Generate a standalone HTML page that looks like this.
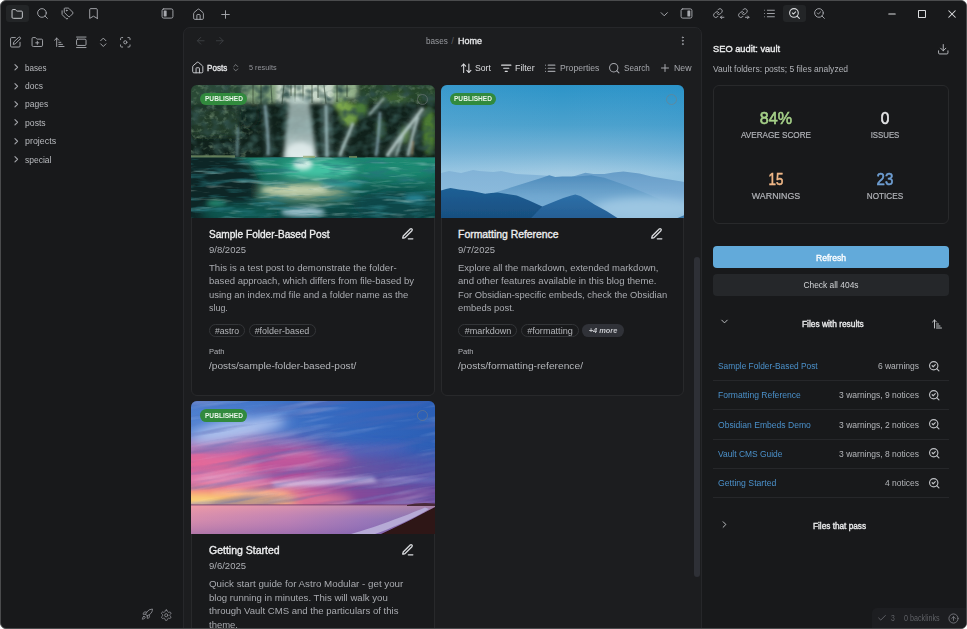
<!DOCTYPE html>
<html lang="en"><head><meta charset="utf-8"><title>Obsidian - Home</title>
<style>
html,body{margin:0;padding:0;background:#fff;}
body{width:967px;height:629px;overflow:hidden;position:relative;font-family:"Liberation Sans",sans-serif;}
#win{position:absolute;left:0;top:0;width:967px;height:629px;box-sizing:border-box;border:1px solid #4a4b4d;border-radius:6px;background:#18191b;overflow:hidden;}
#in{position:absolute;left:-1px;top:-1px;width:967px;height:629px;}
.b{position:absolute;box-sizing:border-box;}
.t{position:absolute;white-space:nowrap;}
.ic{position:absolute;fill:none;stroke:currentColor;stroke-linecap:round;stroke-linejoin:round;overflow:visible;}
.img{position:absolute;overflow:hidden;}
.img svg{display:block;width:100%;height:100%;}
</style></head>
<body>
<div id="win"><div id="in">
<div class="b" style="left:5.80px;top:4.70px;width:23.20px;height:17.70px;background:#232527;border-radius:3px;"></div>
<svg class="ic" style="left:10.90px;top:7.50px;width:12.4px;height:12.4px;color:#c9cbcf;stroke-width:1.9" viewBox="0 0 24 24" ><path d="M20 20a2 2 0 0 0 2-2V8a2 2 0 0 0-2-2h-7.9a2 2 0 0 1-1.69-.9L9.6 3.9A2 2 0 0 0 7.93 3H4a2 2 0 0 0-2 2v13a2 2 0 0 0 2 2Z"/></svg>
<svg class="ic" style="left:35.70px;top:7.20px;width:13px;height:13px;color:#a6a8ad;stroke-width:1.75" viewBox="0 0 24 24" ><circle cx="11" cy="11" r="8"/><path d="m21 21-4.3-4.3"/></svg>
<svg class="ic" style="left:61.00px;top:7.10px;width:13px;height:13px;color:#a6a8ad;stroke-width:1.75" viewBox="0 0 24 24" ><path d="M13.172 2a2 2 0 0 1 1.414.586l6.710 6.710a2.400 2.400 0 0 1 0 3.408l-4.592 4.592a2.400 2.400 0 0 1-3.408 0l-6.710-6.710A2 2 0 0 1 6 9.172V3a1 1 0 0 1 1-1z"/><path d="M2 7v6.172a2 2 0 0 0 .586 1.414l6.710 6.710a2.400 2.400 0 0 0 3.191.193"/><circle cx="10.500" cy="6.500" r=".8" fill="currentColor"/></svg>
<svg class="ic" style="left:86.50px;top:7.20px;width:13px;height:13px;color:#a6a8ad;stroke-width:1.75" viewBox="0 0 24 24" ><path d="m19 21-7-4-7 4V5a2 2 0 0 1 2-2h10a2 2 0 0 1 2 2v16z"/></svg>
<svg class="ic" style="left:160.50px;top:7.00px;width:13px;height:13px;color:#a6a8ad;stroke-width:1.75" viewBox="0 0 24 24" ><rect x="2" y="3.5" width="20" height="17" rx="3"/><rect x="5" y="6.4" width="5.4" height="11.2" rx="0.8" fill="currentColor" stroke="none"/></svg>
<svg class="ic" style="left:191.90px;top:7.50px;width:13px;height:13px;color:#a6a8ad;stroke-width:1.75" viewBox="0 0 24 24" ><path d="M15 21v-8a1 1 0 0 0-1-1h-4a1 1 0 0 0-1 1v8"/><path d="M3 10a2 2 0 0 1 .709-1.528l7-5.999a2 2 0 0 1 2.582 0l7 5.999A2 2 0 0 1 21 10v9a2 2 0 0 1-2 2H5a2 2 0 0 1-2-2z"/></svg>
<svg class="ic" style="left:218.70px;top:8.00px;width:13px;height:13px;color:#a6a8ad;stroke-width:1.75" viewBox="0 0 24 24" ><path d="M5 12h14"/><path d="M12 5v14"/></svg>
<svg class="ic" style="left:9.40px;top:35.50px;width:12.6px;height:12.6px;color:#a6a8ad;stroke-width:1.8" viewBox="0 0 24 24" ><path d="M12 3H5a2 2 0 0 0-2 2v14a2 2 0 0 0 2 2h14a2 2 0 0 0 2-2v-7"/><path d="M18.375 2.625a2.121 2.121 0 1 1 3 3L12 15l-4 1 1-4Z"/></svg>
<svg class="ic" style="left:31.40px;top:35.50px;width:12.6px;height:12.6px;color:#a6a8ad;stroke-width:1.8" viewBox="0 0 24 24" ><path d="M12 10v6"/><path d="M9 13h6"/><path d="M20 20a2 2 0 0 0 2-2V8a2 2 0 0 0-2-2h-7.9a2 2 0 0 1-1.69-.9L9.6 3.9A2 2 0 0 0 7.93 3H4a2 2 0 0 0-2 2v13a2 2 0 0 0 2 2Z"/></svg>
<svg class="ic" style="left:52.90px;top:35.50px;width:12.6px;height:12.6px;color:#a6a8ad;stroke-width:1.8" viewBox="0 0 24 24" ><path d="m3 8 4-4 4 4"/><path d="M7 4v16"/><path d="M11 12h4"/><path d="M11 16h7"/><path d="M11 20h10"/></svg>
<svg class="ic" style="left:74.70px;top:35.50px;width:12.6px;height:12.6px;color:#a6a8ad;stroke-width:1.8" viewBox="0 0 24 24" ><path d="M3 2h18"/><rect width="18" height="12" x="3" y="6" rx="2"/><path d="M3 22h18"/></svg>
<svg class="ic" style="left:96.70px;top:35.50px;width:12.6px;height:12.6px;color:#a6a8ad;stroke-width:1.8" viewBox="0 0 24 24" ><path d="m7 15 5 5 5-5"/><path d="m7 9 5-5 5 5"/></svg>
<svg class="ic" style="left:118.80px;top:35.50px;width:12.6px;height:12.6px;color:#a6a8ad;stroke-width:1.8" viewBox="0 0 24 24" ><circle cx="12" cy="12" r="3"/><path d="M3 7V5a2 2 0 0 1 2-2h2"/><path d="M17 3h2a2 2 0 0 1 2 2v2"/><path d="M21 17v2a2 2 0 0 1-2 2h-2"/><path d="M7 21H5a2 2 0 0 1-2-2v-2"/></svg>
<svg class="ic" style="left:11.15px;top:62.15px;width:10.5px;height:10.5px;color:#a2a4a9;stroke-width:2.5" viewBox="0 0 24 24" ><path d="m9 18 6-6-6-6"/></svg>
<div class="t" id="t0" style="top:60.59px;font-size:9.3px;line-height:14px;color:#b9bbbf;transform:scaleX(0.8665);transform-origin:0 50%;left:24.80px;"><span>bases</span></div>
<svg class="ic" style="left:11.15px;top:80.55px;width:10.5px;height:10.5px;color:#a2a4a9;stroke-width:2.5" viewBox="0 0 24 24" ><path d="m9 18 6-6-6-6"/></svg>
<div class="t" id="t1" style="top:78.99px;font-size:9.3px;line-height:14px;color:#b9bbbf;transform:scaleX(0.9114);transform-origin:0 50%;left:24.80px;"><span>docs</span></div>
<svg class="ic" style="left:11.15px;top:98.95px;width:10.5px;height:10.5px;color:#a2a4a9;stroke-width:2.5" viewBox="0 0 24 24" ><path d="m9 18 6-6-6-6"/></svg>
<div class="t" id="t2" style="top:97.39px;font-size:9.3px;line-height:14px;color:#b9bbbf;transform:scaleX(0.9154);transform-origin:0 50%;left:24.80px;"><span>pages</span></div>
<svg class="ic" style="left:11.15px;top:117.35px;width:10.5px;height:10.5px;color:#a2a4a9;stroke-width:2.5" viewBox="0 0 24 24" ><path d="m9 18 6-6-6-6"/></svg>
<div class="t" id="t3" style="top:115.79px;font-size:9.3px;line-height:14px;color:#b9bbbf;transform:scaleX(0.9310);transform-origin:0 50%;left:24.80px;"><span>posts</span></div>
<svg class="ic" style="left:11.15px;top:135.75px;width:10.5px;height:10.5px;color:#a2a4a9;stroke-width:2.5" viewBox="0 0 24 24" ><path d="m9 18 6-6-6-6"/></svg>
<div class="t" id="t4" style="top:134.19px;font-size:9.3px;line-height:14px;color:#b9bbbf;transform:scaleX(0.9551);transform-origin:0 50%;left:24.80px;"><span>projects</span></div>
<svg class="ic" style="left:11.15px;top:154.15px;width:10.5px;height:10.5px;color:#a2a4a9;stroke-width:2.5" viewBox="0 0 24 24" ><path d="m9 18 6-6-6-6"/></svg>
<div class="t" id="t5" style="top:152.59px;font-size:9.3px;line-height:14px;color:#b9bbbf;transform:scaleX(0.9153);transform-origin:0 50%;left:24.80px;"><span>special</span></div>
<svg class="ic" style="left:140.75px;top:608.35px;width:12.5px;height:12.5px;color:#8a8c91;stroke-width:1.75" viewBox="0 0 24 24" ><path d="M4.500 16.500c-1.500 1.260-2 5-2 5s3.740-.5 5-2c.710-.840.700-2.130-.090-2.910a2.180 2.180 0 0 0-2.910-.090z"/><path d="m12 15-3-3a22 22 0 0 1 2-3.950A12.880 12.880 0 0 1 22 2c0 2.720-.780 7.500-6 11a22.350 22.350 0 0 1-4 2z"/><path d="M9 12H4s.550-3.030 2-4c1.620-1.080 5 0 5 0"/><path d="M12 15v5s3.030-.550 4-2c1.080-1.620 0-5 0-5"/></svg>
<svg class="ic" style="left:160.45px;top:608.55px;width:12.5px;height:12.5px;color:#8a8c91;stroke-width:1.75" viewBox="0 0 24 24" ><path d="M12.220 2h-.440a2 2 0 0 0-2 2v.180a2 2 0 0 1-1 1.730l-.430.250a2 2 0 0 1-2 0l-.150-.080a2 2 0 0 0-2.730.730l-.220.380a2 2 0 0 0 .730 2.730l.150.100a2 2 0 0 1 1 1.720v.510a2 2 0 0 1-1 1.740l-.150.090a2 2 0 0 0-.730 2.730l.220.380a2 2 0 0 0 2.730.730l.150-.080a2 2 0 0 1 2 0l.430.250a2 2 0 0 1 1 1.730V20a2 2 0 0 0 2 2h.440a2 2 0 0 0 2-2v-.180a2 2 0 0 1 1-1.730l.430-.250a2 2 0 0 1 2 0l.150.080a2 2 0 0 0 2.730-.730l.220-.390a2 2 0 0 0-.730-2.730l-.150-.080a2 2 0 0 1-1-1.740v-.500a2 2 0 0 1 1-1.740l.150-.090a2 2 0 0 0 .730-2.730l-.220-.380a2 2 0 0 0-2.730-.730l-.150.080a2 2 0 0 1-2 0l-.430-.250a2 2 0 0 1-1-1.730V4a2 2 0 0 0-2-2z"/><circle cx="12" cy="12" r="3"/></svg>
<div class="b" style="left:183.00px;top:27.00px;width:519.00px;height:610.00px;background:#1c1d1f;border:1px solid #26272a;border-radius:7px 7px 0 0;"></div>
<svg class="ic" style="left:195.45px;top:35.15px;width:11.5px;height:11.5px;color:#3c3e42;stroke-width:2" viewBox="0 0 24 24" ><path d="m12 19-7-7 7-7"/><path d="M19 12H5"/></svg>
<svg class="ic" style="left:214.45px;top:35.15px;width:11.5px;height:11.5px;color:#3c3e42;stroke-width:2" viewBox="0 0 24 24" ><path d="M5 12h14"/><path d="m12 5 7 7-7 7"/></svg>
<div class="t" id="t6" style="top:33.89px;font-size:9.3px;line-height:14px;color:#9a9ca1;transform:scaleX(0.8786);transform-origin:0 50%;left:425.70px;"><span>bases</span></div>
<div class="t" id="t7" style="top:33.89px;font-size:9.3px;line-height:14px;color:#5c5e63;left:451.20px;"><span>/</span></div>
<div class="t" id="t8" style="top:33.89px;font-size:9.3px;line-height:14px;color:#e4e5e7;-webkit-text-stroke:0.36px currentColor;transform:scaleX(0.9673);transform-origin:0 50%;left:457.60px;"><span>Home</span></div>
<svg class="ic" style="left:677.15px;top:35.25px;width:11.5px;height:11.5px;color:#a0a2a7;stroke-width:2" viewBox="0 0 24 24" ><circle cx="12" cy="12" r="1"/><circle cx="12" cy="5" r="1"/><circle cx="12" cy="19" r="1"/></svg>
<svg class="ic" style="left:191.15px;top:60.65px;width:13.5px;height:13.5px;color:#c4c6ca;stroke-width:1.75" viewBox="0 0 24 24" ><path d="M15 21v-8a1 1 0 0 0-1-1h-4a1 1 0 0 0-1 1v8"/><path d="M3 10a2 2 0 0 1 .709-1.528l7-5.999a2 2 0 0 1 2.582 0l7 5.999A2 2 0 0 1 21 10v9a2 2 0 0 1-2 2H5a2 2 0 0 1-2-2z"/></svg>
<div class="t" id="t9" style="top:60.59px;font-size:9.6px;line-height:14px;color:#e6e7e9;-webkit-text-stroke:0.36px currentColor;transform:scaleX(0.8417);transform-origin:0 50%;left:206.80px;"><span>Posts</span></div>
<svg class="ic" style="left:231.35px;top:62.75px;width:9.5px;height:9.5px;color:#8e9095;stroke-width:2" viewBox="0 0 24 24" ><path d="m7 15 5 5 5-5"/><path d="m7 9 5-5 5 5"/></svg>
<div class="t" id="t10" style="top:60.75px;font-size:7.6px;line-height:14px;color:#93959a;transform:scaleX(0.9616);transform-origin:0 50%;left:249.00px;"><span>5 results</span></div>
<svg class="ic" style="left:459.85px;top:61.75px;width:12.5px;height:12.5px;color:#dcdde0;stroke-width:2" viewBox="0 0 24 24" ><path d="m21 16-4 4-4-4"/><path d="M17 20V4"/><path d="m3 8 4-4 4 4"/><path d="M7 4v16"/></svg>
<div class="t" id="t11" style="top:61.19px;font-size:9.3px;line-height:14px;color:#dcdde0;transform:scaleX(0.9319);transform-origin:0 50%;left:474.80px;"><span>Sort</span></div>
<svg class="ic" style="left:499.95px;top:61.75px;width:12.5px;height:12.5px;color:#dcdde0;stroke-width:2" viewBox="0 0 24 24" ><path d="M3 6h18"/><path d="M7 12h10"/><path d="M10 18h4"/></svg>
<div class="t" id="t12" style="top:61.19px;font-size:9.3px;line-height:14px;color:#dcdde0;transform:scaleX(0.9481);transform-origin:0 50%;left:515.00px;"><span>Filter</span></div>
<svg class="ic" style="left:544.05px;top:61.75px;width:12.5px;height:12.5px;color:#9c9ea3;stroke-width:2" viewBox="0 0 24 24" ><path d="M3 12h.01"/><path d="M3 18h.01"/><path d="M3 6h.01"/><path d="M8 12h13"/><path d="M8 18h13"/><path d="M8 6h13"/></svg>
<div class="t" id="t13" style="top:61.19px;font-size:9.3px;line-height:14px;color:#a7a9ae;transform:scaleX(0.9274);transform-origin:0 50%;left:559.50px;"><span>Properties</span></div>
<svg class="ic" style="left:608.35px;top:61.75px;width:12.5px;height:12.5px;color:#a7a9ae;stroke-width:2" viewBox="0 0 24 24" ><circle cx="11" cy="11" r="8"/><path d="m21 21-4.3-4.3"/></svg>
<div class="t" id="t14" style="top:61.19px;font-size:9.3px;line-height:14px;color:#a7a9ae;transform:scaleX(0.8721);transform-origin:0 50%;left:623.60px;"><span>Search</span></div>
<svg class="ic" style="left:658.90px;top:62.00px;width:12px;height:12px;color:#a7a9ae;stroke-width:2" viewBox="0 0 24 24" ><path d="M5 12h14"/><path d="M12 5v14"/></svg>
<div class="t" id="t15" style="top:61.19px;font-size:9.3px;line-height:14px;color:#a7a9ae;transform:scaleX(0.9404);transform-origin:0 50%;left:674.00px;"><span>New</span></div>
<div class="b" style="left:694.00px;top:257.00px;width:5.70px;height:320.00px;background:#2e3036;border-radius:3px;"></div>
<div class="b" style="left:191.30px;top:85.00px;width:244.00px;height:310.70px;background:#191a1c;border:1px solid #28292b;border-radius:6px;"></div>
<div class="img" style="left:191.30px;top:85.00px;width:244.00px;height:133px;border-radius:6px 6px 0 0;"><svg viewBox="0 0 244 133" preserveAspectRatio="none">
<defs>
<filter id="wb1" filterUnits="userSpaceOnUse" x="-20" y="-20" width="284" height="173"><feGaussianBlur stdDeviation="0.7"/></filter>
<filter id="wb15" filterUnits="userSpaceOnUse" x="-20" y="-20" width="284" height="173"><feGaussianBlur stdDeviation="1.200"/></filter>
<filter id="wb2" filterUnits="userSpaceOnUse" x="-20" y="-20" width="284" height="173"><feGaussianBlur stdDeviation="2"/></filter>
<filter id="wb4" filterUnits="userSpaceOnUse" x="-30" y="-30" width="304" height="193"><feGaussianBlur stdDeviation="5"/></filter>
<filter id="wleaf" filterUnits="userSpaceOnUse" x="0" y="0" width="244" height="75"><feTurbulence type="fractalNoise" baseFrequency="0.16 0.2" numOctaves="3" seed="7"/><feColorMatrix type="matrix" values="0 0 0 0 0.38  0 0 0 0 0.55  0 0 0 0 0.36  0 2.6 0 0 -1.3"/></filter>
<filter id="wdark" filterUnits="userSpaceOnUse" x="0" y="0" width="244" height="75"><feTurbulence type="fractalNoise" baseFrequency="0.09 0.12" numOctaves="2" seed="3"/><feColorMatrix type="matrix" values="0 0 0 0 0.03  0 0 0 0 0.08  0 0 0 0 0.07  0 0 2.4 0 -0.95"/></filter>
<filter id="wrip" filterUnits="userSpaceOnUse" x="0" y="72" width="244" height="61"><feTurbulence type="fractalNoise" baseFrequency="0.035 0.22" numOctaves="3" seed="11"/><feColorMatrix type="matrix" values="0 0 0 0 0.80  0 0 0 0 0.97  0 0 0 0 0.92  3.2 0 0 0 -1.75"/></filter>
<filter id="wrip2" filterUnits="userSpaceOnUse" x="0" y="72" width="244" height="61"><feTurbulence type="fractalNoise" baseFrequency="0.03 0.18" numOctaves="3" seed="23"/><feColorMatrix type="matrix" values="0 0 0 0 0.02  0 0 0 0 0.18  0 0 0 0 0.20  0 3 0 0 -1.45"/></filter>
<linearGradient id="wwat" x1="0" y1="0" x2="0" y2="1"><stop offset="0" stop-color="#1e8a72"/><stop offset="0.35" stop-color="#156e5e"/><stop offset="0.7" stop-color="#0e524a"/><stop offset="1" stop-color="#0b4040"/></linearGradient>
<linearGradient id="wfall" x1="0" y1="0" x2="0" y2="1"><stop offset="0" stop-color="#c4d8d6" stop-opacity="0.7"/><stop offset="0.5" stop-color="#b8d2d2" stop-opacity="0.75"/><stop offset="1" stop-color="#e8f2f2" stop-opacity="0.92"/></linearGradient>
<linearGradient id="wlm" x1="0" y1="0" x2="1" y2="0"><stop offset="0" stop-color="#fff"/><stop offset="0.2" stop-color="#fff"/><stop offset="0.3" stop-color="#2c2c2c"/><stop offset="1" stop-color="#242424"/></linearGradient><mask id="wleafm" maskUnits="userSpaceOnUse" x="0" y="0" width="244" height="75"><rect x="0" y="0" width="244" height="75" fill="url(#wlm)"/><rect x="0" y="0" width="244" height="19" fill="#fff" opacity="0.78"/></mask>
<clipPath id="wwc"><rect x="0" y="72.500" width="244" height="61"/></clipPath>
<clipPath id="wcliff"><rect x="0" y="0" width="244" height="72.500"/></clipPath>
</defs>
<rect width="244" height="133" fill="#10211b"/>
<g clip-path="url(#wcliff)">
<g filter="url(#wb2)">
<rect x="-6" y="-6" width="62" height="26" fill="#2c4935"/>
<rect x="52" y="-6" width="36" height="24" fill="#7a9a76"/>
<rect x="86" y="-6" width="58" height="24" fill="#c6d6c8"/>
<rect x="142" y="-6" width="26" height="20" fill="#93b08a"/>
<rect x="166" y="-6" width="90" height="24" fill="#27442b"/>
<rect x="0" y="22" width="48" height="30" fill="#213a2b"/>
<ellipse cx="58" cy="30" rx="10" ry="13" fill="#10211a"/>
<ellipse cx="158" cy="29" rx="10" ry="12" fill="#709c44"/>
<ellipse cx="170" cy="24" rx="7" ry="8" fill="#4a7a38"/>
<ellipse cx="150" cy="20" rx="8" ry="6" fill="#7aa64c"/>
<ellipse cx="238" cy="46" rx="7" ry="24" fill="#4c7a31"/>
<ellipse cx="204" cy="14" rx="14" ry="6" fill="#3a6030"/>
<ellipse cx="214" cy="50" rx="5" ry="9" fill="#3f682e"/>
<ellipse cx="190" cy="44" rx="5" ry="10" fill="#2f5230"/>
</g>
<g opacity="0.5"><rect x="0" y="0" width="244" height="73" filter="url(#wleaf)" mask="url(#wleafm)"/></g>
<rect x="0" y="0" width="244" height="73" filter="url(#wdark)" opacity="0.9"/>
<g filter="url(#wb1)" stroke="#24382a" stroke-width="1.200" opacity="0.5">
<path d="M62 0v19M70 0v20M80 0l1 18M93 0l-2 19M104 0v17M112 0v16M121 0v18M133 0l2 19M146 0v17M100 0v11M127 0v13M156 0v12"/>
</g>
<g filter="url(#wb2)">
<path d="M98 12 L118 12 L126 76 L92 76 Z" fill="url(#wfall)"/>
<ellipse cx="109" cy="66" rx="13" ry="9" fill="#e9f4f3" opacity="0.7"/>

</g>
<g filter="url(#wb2)" fill="none" stroke-linecap="butt"><path d="M74 20 C76 40 78 55 77 70" stroke="#8fb0b8" stroke-width="5.5" opacity="0.32"/><path d="M47 42 L46 71" stroke="#7fa4aa" stroke-width="3.6" opacity="0.32"/><path d="M135 20 L136 72" stroke="#9fbec0" stroke-width="11" opacity="0.32"/><path d="M162 38 C157 52 152 60 149 71" stroke="#b4cccb" stroke-width="6.5" opacity="0.32"/><path d="M189 27 C188 45 187 58 185 71" stroke="#8fb0bc" stroke-width="5" opacity="0.32"/><path d="M232 23 C220 40 206 55 196 71" stroke="#c2d6d4" stroke-width="8" opacity="0.32"/><path d="M227 32 C222 48 219 60 217 71" stroke="#b8cecc" stroke-width="6" opacity="0.32"/><path d="M212 50 L205 71" stroke="#b0c6c4" stroke-width="4.5" opacity="0.32"/><path d="M193 13 L178 30" stroke="#b8ccca" stroke-width="3.6" opacity="0.32"/></g>
<g filter="url(#wb15)" fill="none" stroke-linecap="butt"><path d="M74 20 C76 40 78 55 77 70" stroke="#8fb0b8" stroke-width="2.4" opacity="0.78"/><path d="M47 42 L46 71" stroke="#7fa4aa" stroke-width="1.6" opacity="0.78"/><path d="M135 20 L136 72" stroke="#9fbec0" stroke-width="3" opacity="0.78"/><path d="M162 38 C157 52 152 60 149 71" stroke="#b4cccb" stroke-width="2.6" opacity="0.78"/><path d="M189 27 C188 45 187 58 185 71" stroke="#8fb0bc" stroke-width="2" opacity="0.78"/><path d="M232 23 C220 40 206 55 196 71" stroke="#c2d6d4" stroke-width="3" opacity="0.78"/><path d="M227 32 C222 48 219 60 217 71" stroke="#b8cecc" stroke-width="2.4" opacity="0.78"/><path d="M212 50 L205 71" stroke="#b0c6c4" stroke-width="1.8" opacity="0.78"/><path d="M193 13 L178 30" stroke="#b8ccca" stroke-width="1.6" opacity="0.78"/><path d="M222 56 L221 70" stroke="#caa06a" stroke-width="1.500" opacity="0.7"/></g>
</g>
<rect x="0" y="72.500" width="244" height="61" fill="url(#wwat)"/>
<g filter="url(#wb1)">
<rect x="0" y="70.300" width="44" height="2.800" fill="#6f8a62" opacity="0.85"/>
<rect x="112" y="70.800" width="12" height="2.200" fill="#8a9c62" opacity="0.8"/>
<rect x="158" y="71" width="8" height="2" fill="#7a9060" opacity="0.8"/>
</g>
<g clip-path="url(#wwc)"><g filter="url(#wb4)">
<ellipse cx="2" cy="100" rx="66" ry="40" fill="#072625"/>
<ellipse cx="128" cy="85" rx="38" ry="9" fill="#44c6a6"/>
<ellipse cx="204" cy="85" rx="40" ry="8" fill="#1c9078" opacity="0.7"/>
<ellipse cx="114" cy="107" rx="46" ry="8" fill="#94ac8a"/>
<ellipse cx="205" cy="120" rx="44" ry="14" fill="#0c4648"/>
<ellipse cx="50" cy="128" rx="40" ry="8" fill="#0f5a52"/>
</g></g>
<g filter="url(#wb2)">
<ellipse cx="112" cy="79" rx="10" ry="6" fill="#e4f5f0" opacity="0.85"/>
<ellipse cx="112" cy="127" rx="22" ry="5" fill="#a4c8d4" opacity="0.9"/>
<ellipse cx="104" cy="105" rx="34" ry="5" fill="#c4d0ac" opacity="0.9"/>
<ellipse cx="150" cy="99" rx="22" ry="2.600" fill="#2fa6b0" opacity="0.8"/>
<ellipse cx="224" cy="113" rx="12" ry="3" fill="#2f9cb4" opacity="0.8"/>
<ellipse cx="25" cy="118" rx="10" ry="3" fill="#2fae8c" opacity="0.7"/>
</g>
<rect x="0" y="73" width="244" height="60" filter="url(#wrip2)" opacity="0.85"/>
<rect x="0" y="73" width="244" height="60" filter="url(#wrip)" opacity="0.32"/>
</svg></div>
<div class="b" style="left:200.10px;top:92.80px;width:46.90px;height:12.50px;background:#318a3d;border-radius:6.3px;"></div>
<div class="t" id="t16" style="top:92.15px;font-size:6.5px;line-height:14px;color:#e9f5ea;font-weight:700;transform:scaleX(1.0125);transform-origin:50% 50%;left:23.55px;width:400px;text-align:center;"><span>PUBLISHED</span></div>
<div class="b" style="left:416.90px;top:93.50px;width:11.20px;height:11.20px;border:1px solid rgba(120,125,130,0.55);border-radius:50%;"></div>
<div class="t" id="t17" style="top:228.11px;font-size:10.4px;line-height:14px;color:#ecedee;-webkit-text-stroke:0.36px currentColor;transform:scaleX(0.9704);transform-origin:0 50%;left:208.60px;"><span>Sample Folder-Based Post</span></div>
<svg class="ic" style="left:401.25px;top:226.75px;width:13.5px;height:13.5px;color:#d8dadd;stroke-width:2.3" viewBox="0 0 24 24" ><path d="M13 21h8"/><path d="M16.376 3.622a1 1 0 0 1 3.002 3.002L7.368 18.635a2 2 0 0 1-.855.506l-2.872.838a.5.5 0 0 1-.62-.62l.838-2.872a2 2 0 0 1 .506-.854z"/></svg>
<div class="t" id="t18" style="top:242.60px;font-size:9.2px;line-height:14px;color:#aeb0b5;transform:scaleX(1.0345);transform-origin:0 50%;left:208.60px;"><span>9/8/2025</span></div>
<div class="t" id="t19" style="top:260.99px;font-size:9.3px;line-height:14px;color:#a9abb0;transform:scaleX(1.0342);transform-origin:0 50%;left:208.60px;"><span>This is a test post to demonstrate the folder-</span></div>
<div class="t" id="t20" style="top:274.42px;font-size:9.3px;line-height:14px;color:#a9abb0;transform:scaleX(1.0259);transform-origin:0 50%;left:208.60px;"><span>based approach, which differs from file-based by</span></div>
<div class="t" id="t21" style="top:287.85px;font-size:9.3px;line-height:14px;color:#a9abb0;transform:scaleX(1.0202);transform-origin:0 50%;left:208.60px;"><span>using an index.md file and a folder name as the</span></div>
<div class="t" id="t22" style="top:301.28px;font-size:9.3px;line-height:14px;color:#a9abb0;transform:scaleX(0.9572);transform-origin:0 50%;left:208.60px;"><span>slug.</span></div>
<div class="b" style="left:208.60px;top:324.20px;width:36.60px;height:12.70px;border:1px solid #333538;border-radius:6.4px;"></div>
<div class="t" id="t23" style="top:323.87px;font-size:8.6px;line-height:14px;color:#b4b6ba;transform:scaleX(1.0088);transform-origin:50% 50%;left:26.90px;width:400px;text-align:center;"><span>#astro</span></div>
<div class="b" style="left:248.50px;top:324.20px;width:67.20px;height:12.70px;border:1px solid #333538;border-radius:6.4px;"></div>
<div class="t" id="t24" style="top:323.87px;font-size:8.6px;line-height:14px;color:#b4b6ba;transform:scaleX(1.0407);transform-origin:50% 50%;left:82.10px;width:400px;text-align:center;"><span>#folder-based</span></div>
<div class="t" id="t25" style="top:344.70px;font-size:7.4px;line-height:14px;color:#b0b2b7;transform:scaleX(1.0251);transform-origin:0 50%;left:208.60px;"><span>Path</span></div>
<div class="t" id="t26" style="top:359.09px;font-size:9.4px;line-height:14px;color:#b4b6ba;transform:scaleX(1.0789);transform-origin:0 50%;left:208.60px;"><span>/posts/sample-folder-based-post/</span></div>
<div class="b" style="left:440.80px;top:85.00px;width:243.60px;height:310.70px;background:#191a1c;border:1px solid #28292b;border-radius:6px;"></div>
<div class="img" style="left:440.80px;top:85.00px;width:243.60px;height:133px;border-radius:6px 6px 0 0;"><svg viewBox="0 0 243 133" preserveAspectRatio="none">
<defs>
<filter id="mb1" filterUnits="userSpaceOnUse" x="-20" y="-20" width="283" height="173"><feGaussianBlur stdDeviation="0.5"/></filter>
<filter id="mb3" filterUnits="userSpaceOnUse" x="-40" y="-40" width="323" height="213"><feGaussianBlur stdDeviation="4"/></filter>
<linearGradient id="msky" x1="0" y1="0" x2="0" y2="1"><stop offset="0" stop-color="#2c94c8"/><stop offset="0.3" stop-color="#4ba1cd"/><stop offset="0.5" stop-color="#76b3d6"/><stop offset="0.66" stop-color="#a2cbe3"/><stop offset="1" stop-color="#a2cbe3"/></linearGradient>
<linearGradient id="mskyx" x1="0" y1="0" x2="1" y2="0"><stop offset="0" stop-color="#6fb0dc" stop-opacity="0.18"/><stop offset="0.5" stop-color="#6fb0dc" stop-opacity="0"/><stop offset="1" stop-color="#1d8ccf" stop-opacity="0.12"/></linearGradient>
<linearGradient id="mmid" x1="0" y1="0" x2="0" y2="1"><stop offset="0" stop-color="#4f8cbc"/><stop offset="0.6" stop-color="#78add3"/><stop offset="1" stop-color="#8ebcdc"/></linearGradient>
<linearGradient id="mfar" x1="0" y1="0" x2="0" y2="1"><stop offset="0" stop-color="#82b3d7"/><stop offset="1" stop-color="#94c1e0"/></linearGradient>
<linearGradient id="mfar2" x1="0" y1="0" x2="0" y2="1"><stop offset="0" stop-color="#679dc8"/><stop offset="1" stop-color="#8fbde0"/></linearGradient>
<linearGradient id="mnear" x1="0" y1="0" x2="0" y2="1"><stop offset="0" stop-color="#1f5f95"/><stop offset="1" stop-color="#184f80"/></linearGradient>
<linearGradient id="mnear2" x1="0" y1="0" x2="0" y2="1"><stop offset="0" stop-color="#2e70a8"/><stop offset="1" stop-color="#255f95"/></linearGradient>
</defs>
<rect width="243" height="133" fill="url(#msky)"/>
<rect width="243" height="133" fill="url(#mskyx)"/>
<g filter="url(#mb1)">
<path d="M0 88 L8 86 L20 88 L32 85 L38 86 L52 87 L60 86 L75 89 L95 90 L110 91 L110 133 L0 133Z" fill="url(#mfar)"/>
<path d="M130 92 L144 87.700 L152 89 L163 89 L172 87.500 L182 86.500 L190 87.500 L198 88.400 L210 91.500 L225 94 L243 97 L243 133 L130 133Z" fill="url(#mfar2)"/>
<path d="M40 112 L62 105 L84 98 L100 93 L108 90.300 L114 92 L121 91.500 L135 91.500 L150 90.300 L156 91.500 L163 92.800 L185 100.400 L204 108 L220 115 L243 121 L243 133 L40 133Z" fill="url(#mmid)"/>
</g>
<g filter="url(#mb3)">
<ellipse cx="205" cy="124" rx="52" ry="11" fill="#9cc6e2"/>
<ellipse cx="95" cy="118" rx="30" ry="5" fill="#6ea8d2" opacity="0.8"/>
</g>
<g filter="url(#mb1)">
<path d="M0 105.500 L5 104 L9.500 103 L18 104.500 L31 106 L44 108.700 L50 108 L56.500 107.400 L66 109 L75.600 110.600 L88.400 115.700 L101 121.400 L112 133 L0 133Z" fill="url(#mnear)"/>
<path d="M90 133 L101 121.400 L112 117 L122 113 L130 110.500 L134 109.400 L139 111 L146 115 L153 119.500 L165 126 L176 133Z" fill="url(#mnear2)"/>
<path d="M236 133 L243 130 L243 133Z" fill="#3a78a8"/>
</g>
</svg></div>
<div class="b" style="left:449.60px;top:92.80px;width:46.90px;height:12.50px;background:#318a3d;border-radius:6.3px;"></div>
<div class="t" id="t27" style="top:92.15px;font-size:6.5px;line-height:14px;color:#e9f5ea;font-weight:700;transform:scaleX(1.0125);transform-origin:50% 50%;left:273.05px;width:400px;text-align:center;"><span>PUBLISHED</span></div>
<div class="b" style="left:666.00px;top:93.50px;width:11.20px;height:11.20px;border:1px solid rgba(120,125,130,0.55);border-radius:50%;"></div>
<div class="t" id="t28" style="top:228.11px;font-size:10.4px;line-height:14px;color:#ecedee;-webkit-text-stroke:0.36px currentColor;left:458.10px;"><span>Formatting Reference</span></div>
<svg class="ic" style="left:650.35px;top:226.75px;width:13.5px;height:13.5px;color:#d8dadd;stroke-width:2.3" viewBox="0 0 24 24" ><path d="M13 21h8"/><path d="M16.376 3.622a1 1 0 0 1 3.002 3.002L7.368 18.635a2 2 0 0 1-.855.506l-2.872.838a.5.5 0 0 1-.62-.62l.838-2.872a2 2 0 0 1 .506-.854z"/></svg>
<div class="t" id="t29" style="top:242.60px;font-size:9.2px;line-height:14px;color:#aeb0b5;transform:scaleX(1.0345);transform-origin:0 50%;left:458.10px;"><span>9/7/2025</span></div>
<div class="t" id="t30" style="top:260.99px;font-size:9.3px;line-height:14px;color:#a9abb0;transform:scaleX(1.0237);transform-origin:0 50%;left:458.10px;"><span>Explore all the markdown, extended markdown,</span></div>
<div class="t" id="t31" style="top:274.42px;font-size:9.3px;line-height:14px;color:#a9abb0;transform:scaleX(1.0291);transform-origin:0 50%;left:458.10px;"><span>and other features available in this blog theme.</span></div>
<div class="t" id="t32" style="top:287.85px;font-size:9.3px;line-height:14px;color:#a9abb0;transform:scaleX(1.0091);transform-origin:0 50%;left:458.10px;"><span>For Obsidian-specific embeds, check the Obsidian</span></div>
<div class="t" id="t33" style="top:301.28px;font-size:9.3px;line-height:14px;color:#a9abb0;transform:scaleX(1.0120);transform-origin:0 50%;left:458.10px;"><span>embeds post.</span></div>
<div class="b" style="left:458.10px;top:324.20px;width:59.20px;height:12.70px;border:1px solid #333538;border-radius:6.4px;"></div>
<div class="t" id="t34" style="top:323.87px;font-size:8.6px;line-height:14px;color:#b4b6ba;transform:scaleX(1.0513);transform-origin:50% 50%;left:287.70px;width:400px;text-align:center;"><span>#markdown</span></div>
<div class="b" style="left:520.60px;top:324.20px;width:58.20px;height:12.70px;border:1px solid #333538;border-radius:6.4px;"></div>
<div class="t" id="t35" style="top:323.87px;font-size:8.6px;line-height:14px;color:#b4b6ba;transform:scaleX(1.0628);transform-origin:50% 50%;left:349.70px;width:400px;text-align:center;"><span>#formatting</span></div>
<div class="b" style="left:582.10px;top:324.20px;width:41.60px;height:12.70px;background:#303238;border-radius:6.4px;"></div>
<div class="t" id="t36" style="top:323.86px;font-size:8px;line-height:14px;color:#c3c5c9;font-weight:700;font-style:italic;transform:scaleX(0.9254);transform-origin:50% 50%;left:402.90px;width:400px;text-align:center;"><span>+4 more</span></div>
<div class="t" id="t37" style="top:344.70px;font-size:7.4px;line-height:14px;color:#b0b2b7;transform:scaleX(1.0251);transform-origin:0 50%;left:458.10px;"><span>Path</span></div>
<div class="t" id="t38" style="top:359.09px;font-size:9.4px;line-height:14px;color:#b4b6ba;transform:scaleX(1.0904);transform-origin:0 50%;left:458.10px;"><span>/posts/formatting-reference/</span></div>
<div class="b" style="left:191.30px;top:401.40px;width:244.00px;height:310.70px;background:#191a1c;border:1px solid #28292b;border-radius:6px;"></div>
<div class="img" style="left:191.30px;top:401.40px;width:244.00px;height:133px;border-radius:6px 6px 0 0;"><svg viewBox="0 0 244 133" preserveAspectRatio="none">
<defs>
<filter id="sb1" filterUnits="userSpaceOnUse" x="-20" y="-20" width="284" height="173"><feGaussianBlur stdDeviation="0.600"/></filter>
<filter id="sb2" filterUnits="userSpaceOnUse" x="-20" y="-20" width="284" height="173"><feGaussianBlur stdDeviation="2.200"/></filter>
<filter id="sb3" filterUnits="userSpaceOnUse" x="-40" y="-40" width="324" height="213"><feGaussianBlur stdDeviation="4"/></filter>
<filter id="sb6" filterUnits="userSpaceOnUse" x="-60" y="-60" width="364" height="253"><feGaussianBlur stdDeviation="8"/></filter>
<linearGradient id="ssky" x1="0" y1="0" x2="1" y2="0"><stop offset="0" stop-color="#4e80d0"/><stop offset="0.5" stop-color="#386cc2"/><stop offset="1" stop-color="#2b5fb6"/></linearGradient>
<linearGradient id="ssea" x1="0" y1="0" x2="1" y2="0"><stop offset="0" stop-color="#ea92a4"/><stop offset="0.4" stop-color="#c682b0"/><stop offset="0.7" stop-color="#9674b6"/><stop offset="1" stop-color="#6e6aaa"/></linearGradient>
<linearGradient id="sseav" x1="0" y1="0" x2="0" y2="1"><stop offset="0" stop-color="#f8a8a8" stop-opacity="0.45"/><stop offset="0.5" stop-color="#a880c0" stop-opacity="0.3"/><stop offset="1" stop-color="#7a5cae" stop-opacity="0.5"/></linearGradient>
<linearGradient id="swarm" gradientUnits="userSpaceOnUse" x1="0" y1="0" x2="244" y2="0"><stop offset="0" stop-color="#da5c98"/><stop offset="0.45" stop-color="#ac4e9a"/><stop offset="0.7" stop-color="#6652a4"/><stop offset="1" stop-color="#5050a8"/></linearGradient><linearGradient id="slow" gradientUnits="userSpaceOnUse" x1="0" y1="0" x2="244" y2="0"><stop offset="0" stop-color="#f68c80"/><stop offset="0.36" stop-color="#f08486"/><stop offset="0.5" stop-color="#c05a98"/><stop offset="0.66" stop-color="#884a9a"/><stop offset="1" stop-color="#6a4a9c"/></linearGradient>
<filter id="sstr" filterUnits="userSpaceOnUse" x="-40" y="-40" width="340" height="200"><feTurbulence type="fractalNoise" baseFrequency="0.010 0.11" numOctaves="3" seed="5"/><feColorMatrix type="matrix" values="0 0 0 0 0.10  0 0 0 0 0.14  0 0 0 0 0.45  2.8 0 0 0 -1.35"/></filter><filter id="sstr2" filterUnits="userSpaceOnUse" x="-40" y="-40" width="340" height="200"><feTurbulence type="fractalNoise" baseFrequency="0.012 0.13" numOctaves="3" seed="19"/><feColorMatrix type="matrix" values="0 0 0 0 0.86  0 0 0 0 0.82  0 0 0 0 0.96  0 2.8 0 0 -1.45"/></filter>
<clipPath id="sskyc"><rect x="0" y="0" width="244" height="104"/></clipPath>
</defs>
<rect width="244" height="133" fill="url(#ssky)"/>
<g clip-path="url(#sskyc)">
<g filter="url(#sb6)">
<path d="M-20 44 L60 38 L120 42 L170 50 L264 60 L264 120 L-20 120Z" fill="url(#swarm)"/>
<ellipse cx="44" cy="30" rx="56" ry="10" fill="#8faae4" transform="rotate(-12 44 30)"/>
</g>
<g filter="url(#sb3)">
<path d="M-20 86 L264 84 L264 112 L-20 112Z" fill="url(#slow)"/>
<ellipse cx="48" cy="29" rx="46" ry="4.500" fill="#b4c8f0" transform="rotate(-12 48 29)"/><ellipse cx="30" cy="24" rx="30" ry="2.500" fill="#a4bcec" opacity="0.8" transform="rotate(-16 30 24)"/>
<ellipse cx="60" cy="45" rx="50" ry="3" fill="#8c7cc4" opacity="0.6" transform="rotate(-10 60 45)"/>
<ellipse cx="28" cy="62" rx="45" ry="8" fill="#e46a9a"/>
<ellipse cx="110" cy="58" rx="50" ry="6" fill="#c45a9c" transform="rotate(-4 110 58)"/>
<ellipse cx="36" cy="78" rx="46" ry="3.500" fill="#e8a8c8"/>
<ellipse cx="40" cy="99" rx="70" ry="5" fill="#f8c666"/>
<ellipse cx="4" cy="99" rx="28" ry="4.500" fill="#fbe070"/>
<ellipse cx="132" cy="99" rx="30" ry="3" fill="#ee8494"/>
<ellipse cx="170" cy="50" rx="50" ry="4" fill="#5a62bc" opacity="0.8" transform="rotate(-5 170 50)"/>
</g>
<g filter="url(#sb2)">
<path d="M80 81.500 L130 78 L182 76 L186 80.500 L130 84.500 L84 86.500Z" fill="#d4c8ea" opacity="0.85"/>
<ellipse cx="60" cy="92" rx="40" ry="1.800" fill="#fbd0a0" opacity="0.8"/>
<ellipse cx="220" cy="79" rx="30" ry="2" fill="#8a84cc" opacity="0.7"/>
</g>
<g transform="rotate(-9 0 104)"><rect x="-40" y="-40" width="340" height="200" filter="url(#sstr)" opacity="0.6"/><rect x="-40" y="-40" width="340" height="200" filter="url(#sstr2)" opacity="0.27"/></g>
</g>
<rect x="0" y="104" width="244" height="29" fill="url(#ssea)"/>
<rect x="0" y="104" width="244" height="29" fill="url(#sseav)"/>
<g filter="url(#sb1)">
<rect x="0" y="103.300" width="244" height="1.200" fill="#7a4470" opacity="0.8"/>
<path d="M160 133 C182 127 214 115 234 106.500 L238 108 C222 118 198 128 184 133Z" fill="#b6aad6" filter="url(#sb1)"/>
<path d="M190 133 C212 123 231 113 244 106 L244 133Z" fill="#2e1219"/>
<path d="M216 104 L224 102.500 L234 102 L244 102.500 L244 105 L216 105Z" fill="#4a2a38"/>
</g>
</svg></div>
<div class="b" style="left:200.10px;top:409.20px;width:46.90px;height:12.50px;background:#318a3d;border-radius:6.3px;"></div>
<div class="t" id="t39" style="top:408.55px;font-size:6.5px;line-height:14px;color:#e9f5ea;font-weight:700;transform:scaleX(1.0125);transform-origin:50% 50%;left:23.55px;width:400px;text-align:center;"><span>PUBLISHED</span></div>
<div class="b" style="left:416.90px;top:409.90px;width:11.20px;height:11.20px;border:1px solid rgba(120,125,130,0.55);border-radius:50%;"></div>
<div class="t" id="t40" style="top:543.61px;font-size:10.4px;line-height:14px;color:#ecedee;-webkit-text-stroke:0.36px currentColor;transform:scaleX(1.0116);transform-origin:0 50%;left:208.60px;"><span>Getting Started</span></div>
<svg class="ic" style="left:401.25px;top:543.15px;width:13.5px;height:13.5px;color:#d8dadd;stroke-width:2.3" viewBox="0 0 24 24" ><path d="M13 21h8"/><path d="M16.376 3.622a1 1 0 0 1 3.002 3.002L7.368 18.635a2 2 0 0 1-.855.506l-2.872.838a.5.5 0 0 1-.62-.62l.838-2.872a2 2 0 0 1 .506-.854z"/></svg>
<div class="t" id="t41" style="top:559.00px;font-size:9.2px;line-height:14px;color:#aeb0b5;transform:scaleX(1.0345);transform-origin:0 50%;left:208.60px;"><span>9/6/2025</span></div>
<div class="t" id="t42" style="top:577.39px;font-size:9.3px;line-height:14px;color:#a9abb0;transform:scaleX(1.0504);transform-origin:0 50%;left:208.60px;"><span>Quick start guide for Astro Modular - get your</span></div>
<div class="t" id="t43" style="top:590.82px;font-size:9.3px;line-height:14px;color:#a9abb0;transform:scaleX(1.0339);transform-origin:0 50%;left:208.60px;"><span>blog running in minutes. This will walk you</span></div>
<div class="t" id="t44" style="top:604.25px;font-size:9.3px;line-height:14px;color:#a9abb0;transform:scaleX(1.0281);transform-origin:0 50%;left:208.60px;"><span>through Vault CMS and the particulars of this</span></div>
<div class="t" id="t45" style="top:617.68px;font-size:9.3px;line-height:14px;color:#a9abb0;transform:scaleX(1.0203);transform-origin:0 50%;left:208.60px;"><span>theme.</span></div>
<div class="b" style="left:702.50px;top:0.00px;width:270.00px;height:640.00px;background:#18191b;"></div>
<div class="b" style="left:660.00px;top:0.00px;width:42.00px;height:27.00px;background:#18191b;"></div>
<svg class="ic" style="left:658.05px;top:7.75px;width:12.5px;height:12.5px;color:#a6a8ad;stroke-width:1.9" viewBox="0 0 24 24" ><path d="m6 9 6 6 6-6"/></svg>
<svg class="ic" style="left:679.50px;top:7.10px;width:13px;height:13px;color:#a6a8ad;stroke-width:1.75" viewBox="0 0 24 24" ><rect x="2" y="3.5" width="20" height="17" rx="3"/><rect x="13.6" y="6.4" width="5.4" height="11.2" rx="0.8" fill="currentColor" stroke="none"/></svg>
<svg class="ic" style="left:712.00px;top:7.00px;width:13px;height:13px;color:#a6a8ad;stroke-width:1.75" viewBox="0 0 24 24" ><path d="M9.2 12.1a4.2 4.2 0 0 0 6.3.5l2.5-2.6a4.2 4.2 0 0 0-5.9-5.9L10.700 5.500"/><path d="M12.600 10.400a4.200 4.200 0 0 0-6.300-.5l-2.500 2.600a4.200 4.200 0 0 0 5.900 5.900l1.400-1.400"/><path d="M22 19h-6.500"/><path d="m18 16.500-2.500 2.500 2.500 2.500"/></svg>
<svg class="ic" style="left:737.20px;top:7.00px;width:13px;height:13px;color:#a6a8ad;stroke-width:1.75" viewBox="0 0 24 24" ><path d="M9.2 12.1a4.2 4.2 0 0 0 6.3.5l2.5-2.6a4.2 4.2 0 0 0-5.9-5.900L10.700 5.500"/><path d="M12.600 10.400a4.200 4.200 0 0 0-6.300-.5l-2.500 2.600a4.200 4.200 0 0 0 5.900 5.900l1.400-1.400"/><path d="M15.500 19h6.500"/><path d="m19.500 16.500 2.500 2.500-2.500 2.500"/></svg>
<svg class="ic" style="left:762.90px;top:7.00px;width:13px;height:13px;color:#a6a8ad;stroke-width:1.75" viewBox="0 0 24 24" ><path d="M3 12h.01"/><path d="M3 18h.01"/><path d="M3 6h.01"/><path d="M8 12h13"/><path d="M8 18h13"/><path d="M8 6h13"/></svg>
<div class="b" style="left:782.90px;top:5.00px;width:23.10px;height:17.30px;background:#232527;border-radius:3px;"></div>
<svg class="ic" style="left:788.10px;top:7.10px;width:13px;height:13px;color:#d8dadd;stroke-width:2" viewBox="0 0 24 24" ><path d="m8 11 2 2 4-4"/><circle cx="11" cy="11" r="8"/><path d="m21 21-4.300-4.300"/></svg>
<svg class="ic" style="left:813.40px;top:7.10px;width:13px;height:13px;color:#a6a8ad;stroke-width:1.75" viewBox="0 0 24 24" ><path d="m8 11 2 2 4-4"/><circle cx="11" cy="11" r="8"/><path d="m21 21-4.300-4.300"/></svg>
<svg class="ic" style="left:886.00px;top:8.00px;width:12px;height:12px;color:#dcdde0;stroke-width:2.1" viewBox="0 0 24 24" ><path d="M5.500 12h13"/></svg>
<svg class="ic" style="left:916.00px;top:7.70px;width:12px;height:12px;color:#dcdde0;stroke-width:2.1" viewBox="0 0 24 24" ><rect x="5" y="5" width="14" height="14" rx="1"/></svg>
<svg class="ic" style="left:946.00px;top:7.70px;width:12px;height:12px;color:#dcdde0;stroke-width:2.1" viewBox="0 0 24 24" ><path d="M5.500 5.500l13 13"/><path d="M18.500 5.500l-13 13"/></svg>
<div class="t" id="t46" style="top:42.49px;font-size:9.7px;line-height:14px;color:#ecedee;-webkit-text-stroke:0.36px currentColor;transform:scaleX(0.9584);transform-origin:0 50%;left:712.90px;"><span>SEO audit: vault</span></div>
<svg class="ic" style="left:936.95px;top:43.05px;width:12.5px;height:12.5px;color:#b4b6ba;stroke-width:1.9" viewBox="0 0 24 24" ><path d="M21 15v4a2 2 0 0 1-2 2H5a2 2 0 0 1-2-2v-4"/><path d="m7 10 5 5 5-5"/><path d="M12 15V3"/></svg>
<div class="t" id="t47" style="top:61.58px;font-size:9px;line-height:14px;color:#b0b2b7;transform:scaleX(0.9453);transform-origin:0 50%;left:712.90px;"><span>Vault folders: posts; 5 files analyzed</span></div>
<div class="b" style="left:712.60px;top:85.40px;width:236.10px;height:139.00px;border:1px solid #28292b;border-radius:6px;"></div>
<div class="t" id="t48" style="top:108.60px;font-size:16.8px;line-height:20px;color:#a6d189;-webkit-text-stroke:0.57px currentColor;transform:scaleX(0.9615);transform-origin:50% 50%;left:575.80px;width:400px;text-align:center;"><span>84%</span></div>
<div class="t" id="t49" style="top:128.00px;font-size:8.4px;line-height:14px;color:#b0b2b7;-webkit-text-stroke:0.2px currentColor;transform:scaleX(0.9710);transform-origin:50% 50%;left:575.80px;width:400px;text-align:center;"><span>AVERAGE SCORE</span></div>
<div class="t" id="t50" style="top:108.60px;font-size:16.8px;line-height:20px;color:#e6e7e9;-webkit-text-stroke:0.57px currentColor;transform:scaleX(0.9204);transform-origin:50% 50%;left:684.70px;width:400px;text-align:center;"><span>0</span></div>
<div class="t" id="t51" style="top:128.00px;font-size:8.4px;line-height:14px;color:#b0b2b7;-webkit-text-stroke:0.2px currentColor;transform:scaleX(0.9338);transform-origin:50% 50%;left:684.70px;width:400px;text-align:center;"><span>ISSUES</span></div>
<div class="t" id="t52" style="top:169.60px;font-size:16.8px;line-height:20px;color:#efb787;-webkit-text-stroke:0.57px currentColor;transform:scaleX(0.7926);transform-origin:50% 50%;left:575.80px;width:400px;text-align:center;"><span>15</span></div>
<div class="t" id="t53" style="top:189.00px;font-size:8.4px;line-height:14px;color:#b0b2b7;-webkit-text-stroke:0.2px currentColor;transform:scaleX(1.0576);transform-origin:50% 50%;left:575.80px;width:400px;text-align:center;"><span>WARNINGS</span></div>
<div class="t" id="t54" style="top:169.60px;font-size:16.8px;line-height:20px;color:#6f9fd4;-webkit-text-stroke:0.57px currentColor;transform:scaleX(0.8997);transform-origin:50% 50%;left:684.70px;width:400px;text-align:center;"><span>23</span></div>
<div class="t" id="t55" style="top:189.00px;font-size:8.4px;line-height:14px;color:#b0b2b7;-webkit-text-stroke:0.2px currentColor;transform:scaleX(0.9749);transform-origin:50% 50%;left:684.70px;width:400px;text-align:center;"><span>NOTICES</span></div>
<div class="b" style="left:712.60px;top:246.00px;width:236.10px;height:22.20px;background:#62aada;border-radius:4px;"></div>
<div class="t" id="t56" style="top:250.79px;font-size:9.3px;line-height:14px;color:#ffffff;-webkit-text-stroke:0.36px currentColor;transform:scaleX(0.9244);transform-origin:50% 50%;left:630.60px;width:400px;text-align:center;"><span>Refresh</span></div>
<div class="b" style="left:712.60px;top:273.60px;width:236.10px;height:22.00px;background:#25272a;border-radius:4px;"></div>
<div class="t" id="t57" style="top:278.39px;font-size:9.3px;line-height:14px;color:#d2d4d7;transform:scaleX(0.9019);transform-origin:50% 50%;left:630.50px;width:400px;text-align:center;"><span>Check all 404s</span></div>
<svg class="ic" style="left:718.80px;top:316.30px;width:11px;height:11px;color:#c8cacd;stroke-width:2" viewBox="0 0 24 24" ><path d="m6 9 6 6 6-6"/></svg>
<div class="t" id="t58" style="top:316.88px;font-size:9.2px;line-height:14px;color:#ecedee;-webkit-text-stroke:0.36px currentColor;transform:scaleX(0.9101);transform-origin:0 50%;left:802.40px;"><span>Files with results</span></div>
<svg class="ic" style="left:930.80px;top:317.60px;width:12px;height:12px;color:#c8cacd;stroke-width:1.9" viewBox="0 0 24 24" ><path d="m3 8 4-4 4 4"/><path d="M7 4v16"/><path d="M11 12h4"/><path d="M11 16h7"/><path d="M11 20h10"/></svg>
<div class="t" id="t59" style="top:359.08px;font-size:9.2px;line-height:14px;color:#4b91cb;transform:scaleX(0.9080);transform-origin:0 50%;left:718.00px;"><span>Sample Folder-Based Post</span></div>
<div class="t" id="t60" style="top:359.08px;font-size:9.1px;line-height:14px;color:#b4b6ba;transform:scaleX(0.9344);transform-origin:100% 50%;left:519.10px;width:400px;text-align:right;"><span>6 warnings</span></div>
<svg class="ic" style="left:928.05px;top:359.55px;width:12.5px;height:12.5px;color:#bec0c4;stroke-width:2.2" viewBox="0 0 24 24" ><path d="m8 11 2 2 4-4"/><circle cx="11" cy="11" r="8"/><path d="m21 21-4.300-4.300"/></svg>
<div class="b" style="left:712.60px;top:380.10px;width:236.10px;height:1.00px;background:#26272a;"></div>
<div class="t" id="t61" style="top:388.38px;font-size:9.2px;line-height:14px;color:#4b91cb;transform:scaleX(0.9318);transform-origin:0 50%;left:718.00px;"><span>Formatting Reference</span></div>
<div class="t" id="t62" style="top:388.38px;font-size:9.1px;line-height:14px;color:#b4b6ba;transform:scaleX(0.9352);transform-origin:100% 50%;left:519.10px;width:400px;text-align:right;"><span>3 warnings, 9 notices</span></div>
<svg class="ic" style="left:928.05px;top:388.85px;width:12.5px;height:12.5px;color:#bec0c4;stroke-width:2.2" viewBox="0 0 24 24" ><path d="m8 11 2 2 4-4"/><circle cx="11" cy="11" r="8"/><path d="m21 21-4.300-4.300"/></svg>
<div class="b" style="left:712.60px;top:409.35px;width:236.10px;height:1.00px;background:#26272a;"></div>
<div class="t" id="t63" style="top:417.68px;font-size:9.2px;line-height:14px;color:#4b91cb;transform:scaleX(0.9319);transform-origin:0 50%;left:718.00px;"><span>Obsidian Embeds Demo</span></div>
<div class="t" id="t64" style="top:417.68px;font-size:9.1px;line-height:14px;color:#b4b6ba;transform:scaleX(0.9352);transform-origin:100% 50%;left:519.10px;width:400px;text-align:right;"><span>3 warnings, 2 notices</span></div>
<svg class="ic" style="left:928.05px;top:418.15px;width:12.5px;height:12.5px;color:#bec0c4;stroke-width:2.2" viewBox="0 0 24 24" ><path d="m8 11 2 2 4-4"/><circle cx="11" cy="11" r="8"/><path d="m21 21-4.300-4.300"/></svg>
<div class="b" style="left:712.60px;top:438.60px;width:236.10px;height:1.00px;background:#26272a;"></div>
<div class="t" id="t65" style="top:446.98px;font-size:9.2px;line-height:14px;color:#4b91cb;transform:scaleX(0.9175);transform-origin:0 50%;left:718.00px;"><span>Vault CMS Guide</span></div>
<div class="t" id="t66" style="top:446.98px;font-size:9.1px;line-height:14px;color:#b4b6ba;transform:scaleX(0.9352);transform-origin:100% 50%;left:519.10px;width:400px;text-align:right;"><span>3 warnings, 8 notices</span></div>
<svg class="ic" style="left:928.05px;top:447.45px;width:12.5px;height:12.5px;color:#bec0c4;stroke-width:2.2" viewBox="0 0 24 24" ><path d="m8 11 2 2 4-4"/><circle cx="11" cy="11" r="8"/><path d="m21 21-4.300-4.300"/></svg>
<div class="b" style="left:712.60px;top:467.85px;width:236.10px;height:1.00px;background:#26272a;"></div>
<div class="t" id="t67" style="top:476.28px;font-size:9.2px;line-height:14px;color:#4b91cb;transform:scaleX(0.9434);transform-origin:0 50%;left:718.00px;"><span>Getting Started</span></div>
<div class="t" id="t68" style="top:476.28px;font-size:9.1px;line-height:14px;color:#b4b6ba;transform:scaleX(0.9339);transform-origin:100% 50%;left:519.10px;width:400px;text-align:right;"><span>4 notices</span></div>
<svg class="ic" style="left:928.05px;top:476.75px;width:12.5px;height:12.5px;color:#bec0c4;stroke-width:2.2" viewBox="0 0 24 24" ><path d="m8 11 2 2 4-4"/><circle cx="11" cy="11" r="8"/><path d="m21 21-4.300-4.300"/></svg>
<div class="b" style="left:712.60px;top:497.10px;width:236.10px;height:1.00px;background:#26272a;"></div>
<svg class="ic" style="left:718.70px;top:519.10px;width:11px;height:11px;color:#c8cacd;stroke-width:2" viewBox="0 0 24 24" ><path d="m9 18 6-6-6-6"/></svg>
<div class="t" id="t69" style="top:519.48px;font-size:9.2px;line-height:14px;color:#ecedee;-webkit-text-stroke:0.36px currentColor;transform:scaleX(0.8948);transform-origin:0 50%;left:812.90px;"><span>Files that pass</span></div>
<div class="b" style="left:872.40px;top:608.00px;width:100.00px;height:30.00px;background:#1d1e21;border-radius:5px 0 0 0;"></div>
<svg class="ic" style="left:877.20px;top:613.40px;width:10px;height:10px;color:#6c6e73;stroke-width:2" viewBox="0 0 24 24" ><path d="M20 6 9 17l-5-5"/></svg>
<div class="t" id="t70" style="top:611.50px;font-size:8.2px;line-height:14px;color:#5e6065;transform:scaleX(0.8329);transform-origin:0 50%;left:891.40px;"><span>3</span></div>
<div class="t" id="t71" style="top:611.50px;font-size:8.2px;line-height:14px;color:#5e6065;transform:scaleX(0.8787);transform-origin:0 50%;left:903.90px;"><span>0 backlinks</span></div>
<svg class="ic" style="left:947.90px;top:613.40px;width:11px;height:11px;color:#7a7c81;stroke-width:1.9" viewBox="0 0 24 24" ><circle cx="12" cy="12" r="10"/><path d="m16 12-4-4-4 4"/><path d="M12 16V8"/></svg>
</div></div>
</body></html>
